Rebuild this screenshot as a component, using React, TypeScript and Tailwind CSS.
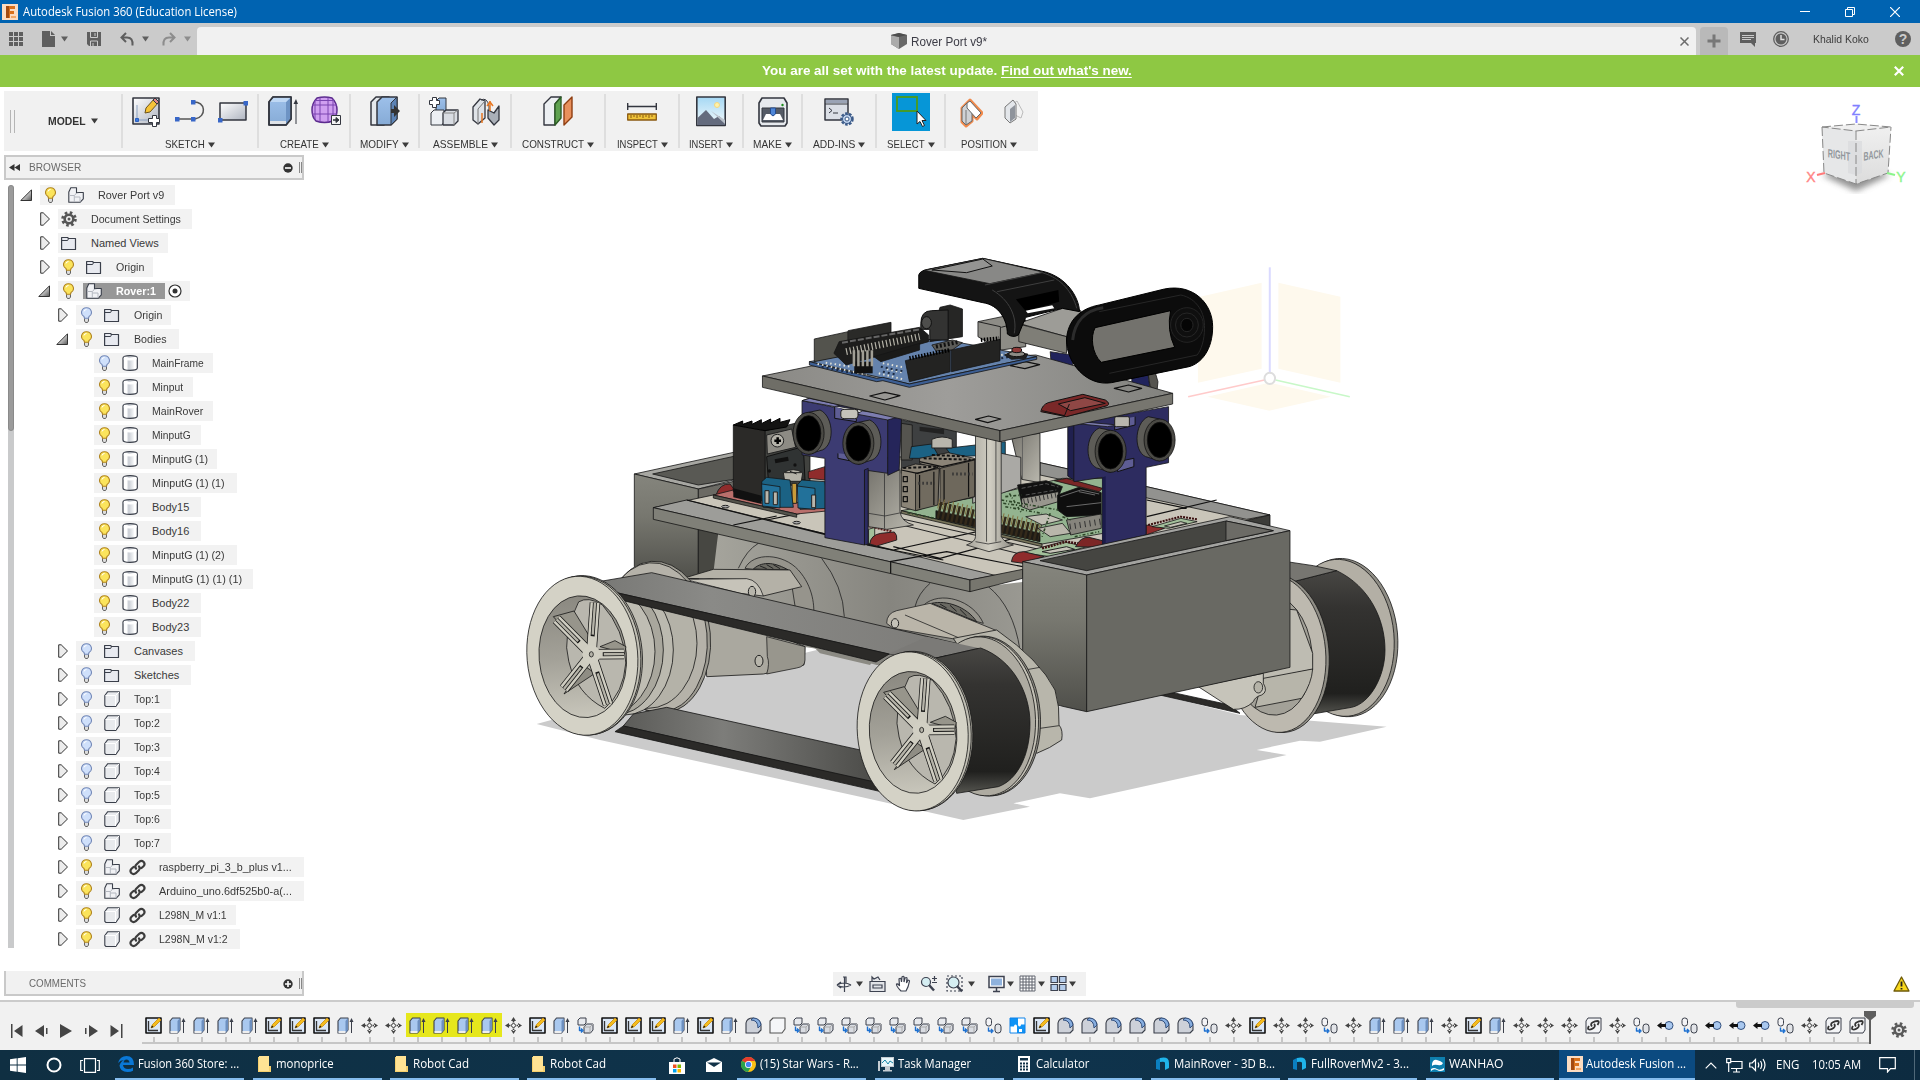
import React, { useLayoutEffect, useRef } from "react";

/* Text squeezed horizontally so that it fills exactly `w` pixels. */
function Fit({ w, children, className = "" }: { w: number; children: string; className?: string }) {
  const ref = useRef<HTMLSpanElement>(null);
  useLayoutEffect(() => {
    const el = ref.current;
    if (el) el.style.transform = `scaleX(${w / el.offsetWidth})`;
  }, [w]);
  return (
    <span className={"block shrink-0 whitespace-nowrap " + className} style={{ width: w }}>
      <span ref={ref} className="inline-block origin-left whitespace-nowrap">{children}</span>
    </span>
  );
}

const Caret = ({ c = "#3c3c3c" }: { c?: string }) => (
  <svg width="7" height="6" viewBox="0 0 7 6" className="shrink-0"><path d="M0 .5h7L3.500 5.500z" fill={c} /></svg>
);

const FusionLogo = () => (
  <svg width="16" height="16" viewBox="0 0 16 16">
    <rect width="16" height="16" fill="#fbdcc2" />
    <path d="M4 2h9v3H8v2h4v3H8v4H4z" fill="#d9711c" />
    <path d="M4 2h3v12H4z" fill="#a34a10" />
    <path d="M9 12h5v2H9z" fill="#f1a868" />
  </svg>
);

/* ---------- title and tab bars ---------- */

function TitleBar() {
  return (
    <div className="flex h-[23px] items-center bg-[#0063b1] pl-[2px] text-white">
      <FusionLogo />
      <Fit w={214} className="ml-[5px] font-['Open_Sans',sans-serif] text-[12px] leading-[23px]">Autodesk Fusion 360 (Education License)</Fit>
      <div className="ml-auto flex items-center gap-[35px] pr-[20px]">
        <svg width="10" height="10" viewBox="0 0 10 10"><path d="M0 4.500h10" stroke="#fff" /></svg>
        <svg width="10" height="10" viewBox="0 0 10 10" fill="none" stroke="#fff"><path d="M.5 2.500h7v7h-7zM2.500 2.500v-2h7v7h-2" /></svg>
        <svg width="10" height="10" viewBox="0 0 10 10"><path d="M0 0l10 10M10 0L0 10" stroke="#fff" strokeWidth="1.200" /></svg>
      </div>
    </div>
  );
}

function TabBar() {
  const g = "#5f5f5f";
  return (
    <div className="flex h-8 items-end bg-[#cbcbcb] font-['Liberation_Sans',Arial,sans-serif]">
      <div className="flex h-8 w-[197px] items-center pl-[9px]">
        <svg width="14" height="14" viewBox="0 0 14 14" fill={g}>
          {[0, 5, 10].map((y) => [0, 5, 10].map((x) => <rect key={x + "-" + y} x={x} y={y} width="4" height="4" />))}
        </svg>
        <svg className="ml-[19px]" width="13" height="16" viewBox="0 0 13 16" fill={g}><path d="M0 0h8v5h5v11H0zM9 0l4 4H9z" /></svg>
        <span className="ml-[6px]"><Caret c={g} /></span>
        <svg className="ml-[19px]" width="14" height="14" viewBox="0 0 14 14"><path d="M0 0h14v14H2l-2-2z" fill={g} /><path d="M3.500 0v5.500h7V0M3.500 14V9h7v5M8 1v3M6 11v3" fill="none" stroke="#cbcbcb" /></svg>
        <svg className="ml-[19px]" width="14" height="14" viewBox="0 0 14 14" fill="none" stroke={g} strokeWidth="2"><path d="M6 1L1.500 5.500L6 10M2 5.500h5c4 0 6 2.500 5.500 8" /></svg>
        <span className="ml-[8px]"><Caret c={g} /></span>
        <svg className="ml-[13px]" width="14" height="14" viewBox="0 0 14 14" fill="none" stroke="#8d8d8d" strokeWidth="2"><path d="M8 1l4.500 4.500L8 10M12 5.500H7c-4 0-6 2.500-5.500 8" /></svg>
        <span className="ml-[8px]"><Caret c="#8d8d8d" /></span>
      </div>
      <div className="flex h-7 w-[1499px] items-center rounded-t-[4px] bg-[#f1f1f1]">
        <svg className="ml-[694px]" width="16" height="16" viewBox="0 0 16 16">
          <path d="M0 2l8-2 8 2v9l-8 5-8-5z" fill="#686868" /><path d="M0 2.500l8 1.500v12l-8-5z" fill="#ababab" /><path d="M0 2l8-2 8 2-8 2z" fill="#4e4e4e" />
        </svg>
        <Fit w={76} className="ml-[4px] pt-px text-[12px] text-[#3c3c46]">Rover Port v9*</Fit>
        <svg className="mr-[7px] ml-auto" width="9" height="9" viewBox="0 0 9 9"><path d="M.5.5l8 8M8.500.5l-8 8" stroke="#6c6c6c" strokeWidth="1.500" /></svg>
      </div>
      <div className="ml-1 flex h-7 w-7 items-center justify-center rounded-t-[4px] bg-[#b9b9b9]">
        <svg width="14" height="14" viewBox="0 0 14 14"><path d="M7 .5v13M.5 7h13" stroke="#777" strokeWidth="3" /></svg>
      </div>
      <div className="flex h-8 flex-1 items-center pl-[12px]">
        <svg width="16" height="15" viewBox="0 0 16 15"><path d="M0 0h16v11h-1v4l-4-4H0z" fill={g} /><path d="M2 3.500h12M2 5.500h12M2 7.500h9" stroke="#cbcbcb" /></svg>
        <svg className="ml-[17px]" width="16" height="16" viewBox="0 0 16 16"><circle cx="8" cy="8" r="7.300" fill="none" stroke={g} strokeWidth="1.300" /><circle cx="8" cy="8" r="5.500" fill={g} /><path d="M8 4v4.500h3.500" stroke="#ddd" strokeWidth="1.500" fill="none" /></svg>
        <Fit w={56} className="ml-[24px] text-[11px] text-[#3c3c3c]">Khalid Koko</Fit>
        <span className="ml-[26px] flex h-4 w-4 items-center justify-center rounded-full bg-[#5f5f5f] text-[14px] font-bold leading-none text-[#cbcbcb]">?</span>
      </div>
    </div>
  );
}

function Notice() {
  return (
    <div className="flex h-8 items-center bg-[#8ec843] font-['Liberation_Sans',Arial,sans-serif] text-[13px] font-bold text-white">
      <Fit w={235} className="ml-[762px]">You are all set with the latest update.</Fit>
      <Fit w={131} className="ml-[4px] [&>span]:underline [&>span]:underline-offset-2">Find out what's new.</Fit>
      <svg className="mr-[16px] ml-auto" width="10" height="10" viewBox="0 0 10 10"><path d="M.8.8l8.400 8.400M9.200.8L.8 9.200" stroke="#fff" strokeWidth="2.200" /></svg>
    </div>
  );
}

/* ---------- ribbon ---------- */

const K = "#33363f";
const Gradients = () => (
  <svg width="0" height="0" className="absolute">
    <defs>
      <linearGradient id="gp" x1="0" y1="0" x2="1" y2="1"><stop offset="0" stopColor="#fff" /><stop offset="1" stopColor="#aeb4c0" /></linearGradient>
      <linearGradient id="gb" x1="0" y1="0" x2="0" y2="1"><stop offset="0" stopColor="#9dc0ea" /><stop offset="1" stopColor="#86abd6" /></linearGradient>
      <linearGradient id="gs" x1="0" y1="0" x2="0" y2="1"><stop offset="0" stopColor="#a5d8f4" /><stop offset="1" stopColor="#f4fafc" /></linearGradient>
      <linearGradient id="gt" x1="0" y1="0" x2="1" y2="1"><stop offset=".4" stopColor="#ddd" /><stop offset="1" stopColor="#555" /></linearGradient>
      <linearGradient id="gc" x1="0" y1="0" x2="1" y2="0"><stop offset="0" stopColor="#fff" /><stop offset=".25" stopColor="#fff" /><stop offset=".4" stopColor="#c9cdd4" /><stop offset=".7" stopColor="#eef0f2" /><stop offset=".8" stopColor="#fff" /></linearGradient>
    </defs>
  </svg>
);
const S = ({ w = 30, children }: { w?: number; children: React.ReactNode }) => (
  <svg width={w} height="32" viewBox={`0 0 ${w} 32`} fill="none" stroke={K} strokeLinejoin="round" className="shrink-0">{children}</svg>
);
const IcSketch = () => (
  <S><rect x="1" y="2" width="26" height="26" fill="url(#gp)" strokeWidth="1.600" /><path d="M5 24V9M5 24h13" stroke="#8aa0c0" />
    <path d="M13 17l1-5L23 2l4 4-9 10z" fill="#f6c338" stroke="#6d5318" /><path d="M23 2l4 4-2 2-4-4z" fill="#e08888" /><rect x="3.500" y="22.500" width="3" height="3" fill="#3a7be0" stroke="#2b5fc0" />
    <path d="M20.500 19.500h4v3h3v4h-3v4h-4v-4h-4v-4h4z" fill="#fff" /></S>
);
const IcLine = () => (
  <S><path d="M3 23h17C32 21 31 5 18 6" stroke="#555" strokeWidth="1.500" /><g fill="#3867c8" stroke="none"><rect x="0" y="21" width="4.500" height="4.500" /><rect x="16" y="21" width="4.500" height="4.500" /><rect x="16" y="4" width="4.500" height="4.500" /></g></S>
);
const IcRect = () => (
  <S><rect x="2" y="7" width="26" height="17" fill="url(#gp)" strokeWidth="1.500" /><g fill="#3867c8" stroke="none"><rect x="0" y="22" width="4.500" height="4.500" /><rect x="25.500" y="5" width="4.500" height="4.500" /></g></S>
);
const IcExtrude = () => (
  <S><path d="M1 6l4-5h18v22l-5 6H1z" fill="url(#gb)" strokeWidth="1.600" /><path d="M18 6l5-5v22l-5 6z" fill="#6d93c4" stroke="none" /><path d="M1.500 6l4-4.500h17L18 6z" fill="#bfd8f4" stroke="none" /><path d="M2 25h16v3H2z" fill="#dfe3e8" stroke="none" /><path d="M1 6l4-5h18v22l-5 6H1z" strokeWidth="1.600" /><path d="M28 28V7" /><path d="M25.500 8L28 3l2 5z" fill={K} stroke="none" /></S>
);
const IcForm = () => (
  <S><path d="M6 2Q13.500 0 21 2q5 5 5 12 0 7-4 11-8.500 3-17 0Q1 21 1 14 1 7 6 2z" fill="#cf9ff0" stroke="#5b2b8d" strokeWidth="1.500" /><path d="M9 1.500v25M17 1.500v25M22 3v22M4 4v20M1 9h25M1 18h25M4 4.500h19" stroke="#7a45b0" /><rect x="20.500" y="19.500" width="9" height="9" fill="#f4f4f4" /><path d="M22 24h4" strokeWidth="1.500" /><path d="M25 21.500l3 2.500-3 2.500z" fill={K} /></S>
);
const IcPress = () => (
  <S><path d="M1 6l5-5h13l-5 5v23H1z" fill="#e4e8ec" strokeWidth="1.500" /><path d="M7 6l5-5h15v22l-6 6H7z" fill="url(#gb)" strokeWidth="1.500" /><path d="M21 7v22l6-6V1z" fill="#5c83b5" /><path d="M21 13h3V9l6 6-6 6v-4h-3z" fill="#333" stroke="none" /></S>
);
const IcNewComp = () => (
  <S><path d="M7 5l3-3h7v12l-3 3H7z" fill="url(#gb)" /><path d="M2 17l3-3h10v12l-2 3H2z" fill="#eceff3" /><path d="M14 17l3-3h12v11l-4 4H14z" fill="#d9dde3" strokeWidth="1.300" /><path d="M14 17h11v12M25 17l4-3" stroke="#888" /><path d="M3.500 1.500h4v3h3v4h-3v3h-4v-3h-3v-4h3z" fill="#fff" /></S>
);
const IcJoint = () => (
  <S><path d="M1 11L8 3l5 2v17L6 28l-5-4z" fill="#dfe3e8" strokeWidth="1.300" /><path d="M6 13v15M6 13l7-8" stroke="#777" /><path d="M16 14l6 3 5-7v14l-5 5-6-7z" fill="#aab0b8" strokeWidth="1.300" /><path d="M9 4q6-3 8 6v4" /><path d="M10 17v10M18 5v10" stroke="#e87722" strokeWidth="1.500" /><path d="M15 10l3-4 3 4" stroke="#e87722" strokeWidth="1.500" /></S>
);
const IcPlane = () => (
  <S><path d="M1 8l7-7h10l-6 7v21H1z" fill="#eceff2" strokeWidth="1.400" /><path d="M12 8l6-7v21l-6 7z" fill="#5fa251" stroke="#2c5c25" strokeWidth="1.400" /><path d="M21 9l8-8v20l-8 8z" fill="#e8905c" stroke="#8f3e11" strokeWidth="1.400" /></S>
);
const IcMeasure = () => (
  <S><path d="M1 10.500h28M.7 7v7M29.300 7v7" strokeWidth="1.400" /><rect x=".7" y="18" width="28.600" height="6" fill="#efc238" stroke="#8a5a12" strokeWidth="1.300" /><path d="M4 19v3M7 19v2M10 19v3M13 19v2M16 19v3M19 19v2M22 19v3M25 19v2" stroke="#8a5a12" /></S>
);
const IcInsert = () => (
  <S><rect x=".8" y="1" width="28.400" height="28.500" fill="url(#gs)" strokeWidth="1.600" /><circle cx="21" cy="9" r="2.500" fill="#fff2a8" stroke="#f4d780" /><path d="M1.500 22L10 14l8 9 5-3 6 6v3h-27.500z" fill="#646b7d" stroke="none" /><path d="M15 15l14 13v-4z" fill="#b9c1cb" stroke="none" /></S>
);
const IcMake = () => (
  <S><path d="M4 2h22l3 5v20l-2 3H3l-2-3V7z" fill="#e6e9ed" strokeWidth="1.600" /><rect x="4" y="12" width="22" height="14" fill="#555b66" /><path d="M8 18h14l3 6H5z" fill="#fff" stroke="none" /><path d="M12.500 12h5v6l-2.500 2-2.500-2z" fill="#4e86d8" stroke="#244c90" /><circle cx="24.500" cy="9" r="1.200" fill="#1a8c1a" stroke="none" /></S>
);
const IcAddins = () => (
  <S><rect x="1" y="3" width="23" height="21" fill="#dbdfe6" strokeWidth="1.500" /><path d="M1 8h23" /><rect x="2" y="4" width="21" height="3" fill="#9aa3b5" stroke="none" /><path d="M5 12l3 2.500L5 17M9 17h5" /><circle cx="23" cy="23" r="5.500" fill="#bfd2ec" stroke="#3b5a88" strokeWidth="2.500" strokeDasharray="2.500 1.400" /><circle cx="23" cy="23" r="4.500" fill="#bfd2ec" stroke="#3b5a88" /><circle cx="23" cy="23" r="2" fill="#fff" stroke="#3b5a88" /></S>
);
const IcSelect = () => (
  <span className="flex h-[38px] w-[38px] bg-[#0696d7]">
    <svg width="38" height="38" viewBox="0 0 38 38"><rect x="5" y="4" width="20" height="14" fill="none" stroke="#4d9b1a" strokeWidth="1.800" /><path d="M25 18v13l3-2.500 2.500 5 2-1-2.500-5h4z" fill="#fff" stroke="#222" /></svg>
  </span>
);
const IcPos1 = () => (
  <S w={23}><path d="M2 12L10 4l12 13-5 6-5-5v7l-6 5-4-4z" stroke="#f08a4c" strokeWidth="3" fill="#f08a4c" /><path d="M2 12l5-5 5 4v14l-6 4-4-4z" fill="#cfd2d6" stroke="#666" /><path d="M6 14v15" stroke="#777" /><path d="M7 7l3-2 11 12-5 5-9-10z" fill="#fff" stroke="#666" /></S>
);
const IcPos2 = () => (
  <S w={20}><path d="M9 8l4-3 6 11-2 6-8-4z" fill="#f2f2f2" stroke="#bbb" /><path d="M1 11l8-7 3 4v15l-6 4-5-5z" fill="#e3e6ea" stroke="#777" /><path d="M6 13v13l5-4V9z" fill="#8e939b" stroke="none" /></S>
);

const GROUPS: { label: string; tw: number; w: number; icons: React.ReactNode[] }[] = [
  { label: "SKETCH", tw: 40, w: 136, icons: [<IcSketch />, <IcLine />, <IcRect />] },
  { label: "CREATE", tw: 39, w: 92, icons: [<IcExtrude />, <IcForm />] },
  { label: "MODIFY", tw: 39, w: 69, icons: [<IcPress />] },
  { label: "ASSEMBLE", tw: 55, w: 92, icons: [<IcNewComp />, <IcJoint />] },
  { label: "CONSTRUCT", tw: 62, w: 94, icons: [<IcPlane />] },
  { label: "INSPECT", tw: 41, w: 74, icons: [<IcMeasure />] },
  { label: "INSERT", tw: 34, w: 64, icons: [<IcInsert />] },
  { label: "MAKE", tw: 29, w: 59, icons: [<IcMake />] },
  { label: "ADD-INS", tw: 42, w: 74, icons: [<IcAddins />] },
  { label: "SELECT", tw: 38, w: 69, icons: [<IcSelect />] },
  { label: "POSITION", tw: 46, w: 86, icons: [<IcPos1 />, <IcPos2 />] },
];

function Ribbon() {
  return (
    <div className="mt-1 ml-1 flex h-[60px] w-[1034px] bg-[#f1f1f1] py-[3px] font-['Liberation_Sans',Arial,sans-serif] text-[#333]">
      <div className="flex w-[119px] items-center border-r-2 border-[#dedede]">
        <div className="ml-[6px] h-[23px] w-[5px] border-x border-[#b5b5b5]" />
        <Fit w={38} className="ml-[33px] pt-[2px] text-[11.500px] font-bold">MODEL</Fit>
        <span className="ml-[5px]"><Caret /></span>
      </div>
      {GROUPS.map((g, i) => (
        <div key={g.label} style={{ width: g.w }} className={"flex shrink-0 flex-col items-center " + (i < 10 ? "border-r-2 border-[#dedede]" : "")}>
          <div className={"-mt-px flex h-[38px] shrink-0 items-center " + (g.label === "POSITION" ? "gap-[21px] pl-[6px]" : "gap-[13px]")}>
            {g.icons.map((ic, k) => <React.Fragment key={k}>{ic}</React.Fragment>)}
          </div>
          <div className="mt-[7px] flex shrink-0 items-center gap-[3px] text-[11.500px] leading-[13px]">
            <Fit w={g.tw}>{g.label}</Fit><Caret />
          </div>
        </div>
      ))}
    </div>
  );
}

/* ---------- browser tree ---------- */

type Kind = "comp" | "gear" | "folder" | "body" | "box";
type Row = { t: string; tw: number; l: number; w: number; k: Kind; on?: boolean; open?: boolean; leaf?: boolean; link?: boolean; sel?: boolean };
const body = (t: string, tw: number, w: number, on = true): Row => ({ t, tw, l: 3, w, k: "body", on, leaf: true });
const ROWS: Row[] = [
  { t: "Rover Port v9", tw: 66, l: 0, w: 135, k: "comp", on: true, open: true },
  { t: "Document Settings", tw: 90, l: 1, w: 134, k: "gear" },
  { t: "Named Views", tw: 68, l: 1, w: 110, k: "folder" },
  { t: "Origin", tw: 28, l: 1, w: 95, k: "folder", on: true },
  { t: "Rover:1", tw: 40, l: 1, w: 132, k: "comp", on: true, open: true, sel: true },
  { t: "Origin", tw: 28, l: 2, w: 95, k: "folder", on: false },
  { t: "Bodies", tw: 33, l: 2, w: 103, k: "folder", on: true, open: true },
  body("MainFrame", 52, 119, false),
  body("Minput", 31, 99),
  body("MainRover", 51, 119),
  body("MinputG", 39, 107),
  body("MinputG (1)", 56, 123),
  body("MinputG (1) (1)", 73, 143),
  body("Body15", 37, 107),
  body("Body16", 37, 107),
  body("MinputG (1) (2)", 73, 143),
  body("MinputG (1) (1) (1)", 90, 159),
  body("Body22", 37, 107),
  body("Body23", 37, 107),
  { t: "Canvases", tw: 49, l: 2, w: 119, k: "folder", on: false },
  { t: "Sketches", tw: 45, l: 2, w: 115, k: "folder", on: false },
  ...[1, 2, 3, 4, 5, 6, 7].map((n): Row => ({ t: "Top:" + n, tw: 26, l: 2, w: 95, k: "box", on: false })),
  { t: "raspberry_pi_3_b_plus v1...", tw: 133, l: 2, w: 228, k: "comp", on: true, link: true },
  { t: "Arduino_uno.6df525b0-a(...", tw: 133, l: 2, w: 228, k: "comp", on: true, link: true },
  { t: "L298N_M v1:1", tw: 68, l: 2, w: 160, k: "box", on: true, link: true },
  { t: "L298N_M v1:2", tw: 69, l: 2, w: 164, k: "box", on: true, link: true },
];

const Bulb = ({ on }: { on: boolean }) => (
  <svg width="11" height="16" viewBox="0 0 11 16" className="shrink-0">
    <path d="M3.500 10.500h4v3.500l-1 1.500h-2l-1-1.500z" fill="#ddd" stroke="#555" strokeWidth=".9" />
    <path d="M5.500.7a4.700 4.700 0 0 1 2.500 8.800l-.5 1.700h-4L3 9.500A4.700 4.700 0 0 1 5.500.7z" fill={on ? "#fbe45c" : "#cfe0fb"} stroke={on ? "#b08420" : "#7489b8"} strokeWidth="1.100" />
    <path d="M3 4.500q.5-2 2.500-2" stroke="#fff" fill="none" />
  </svg>
);
const Gear = ({ c = "#555", bg = "#f1f1f1" }: { c?: string; bg?: string }) => (
  <svg width="16" height="16" viewBox="0 0 16 16" className="shrink-0">
    <circle cx="8" cy="8" r="6.300" fill="none" stroke={c} strokeWidth="3" strokeDasharray="2.500 2.450" />
    <circle cx="8" cy="8" r="5.600" fill={c} /><circle cx="8" cy="8" r="3" fill={bg} /><circle cx="8" cy="8" r="1.500" fill={c} />
  </svg>
);
const KindIcon = ({ k }: { k: Kind }) => {
  if (k === "gear") return <Gear />;
  return (
    <svg width="17" height="16" viewBox="0 0 17 16" fill="none" stroke="#3a3f4a" strokeLinejoin="round" className="shrink-0">
      {k === "folder" && <><path d="M.6 2.500h5.900l1 1h7v11H.6z" fill="#e8eaf0" strokeWidth="1.200" /><path d="M.6 5.500h6l1-2" /></>}
      {k === "body" && <><path d="M1 3q0-2.300 7-2.300T15.300 3v10q0 2.300-7.300 2.300T1 13z" fill="url(#gc)" strokeWidth="1.200" /><path d="M2 3q6 2.500 12.500 0" stroke="#fff" strokeWidth="2.500" /></>}
      {k === "box" && <><path d="M.8 4.500l3-3.800h11.500v9.800l-3.500 5H2l-1.200-1.200z" fill="#e8eaed" strokeWidth="1.100" /><path d="M1.500 4.500h10v10.500M11.500 4.500l3.500-3.500" stroke="#fff" /></>}
      {k === "comp" && <><path d="M.8 5l2-4.200h5.700v5l2.500-.3 1.500 0h2.800v6.300l-3.300 3.500H.8z" fill="#f1f2f5" strokeWidth="1.100" /><path d="M1.300 8.500h5v6.500M6.500 8.500l2-2.500M6.800 10h5.200v5" stroke="#b4b8c0" /></>}
    </svg>
  );
};
const LinkIcon = () => (
  <svg width="17" height="17" viewBox="0 0 17 17" fill="none" stroke="#3d3d3d" strokeWidth="2.200" strokeLinecap="round" className="shrink-0">
    <path d="M7 9.500q-1.500-2 .2-3.700l3-3Q12.500 1 14.700 3q1.800 2.200-.2 4.200L12.500 9M10 7.500q1.500 2-.2 3.700l-3 3Q4.500 16 2.300 14q-1.800-2.200.2-4.200L4.500 8" />
  </svg>
);

const INDENT = ["pl-[6px]", "pl-[24px]", "pl-[42px]", "pl-[60px]"];

function TreeRow({ r }: { r: Row }) {
  return (
    <div className={"flex h-5 items-center " + INDENT[r.l]}>
      <div className="flex w-5 shrink-0 items-center">
        {!r.leaf && (r.open
          ? <svg width="12" height="12" viewBox="0 0 12 12"><path d="M11.500 .8v10.700H.8z" fill="url(#gt)" stroke="#333" /></svg>
          : <svg width="12" height="14" viewBox="0 0 12 14" className="ml-[2px]"><path d="M.7.8h2.500L9.500 7l-6.300 6.200H.7z" fill="#ececec" stroke="#333" /></svg>)}
      </div>
      <div className="flex h-5 shrink-0 items-center overflow-hidden bg-[#f2f2f2]" style={{ width: r.w }}>
        {r.on === undefined
          ? <div className="ml-[3px] flex w-[30px]"><KindIcon k={r.k} /></div>
          : <>
            <div className="flex w-7 shrink-0 pl-[5px]"><Bulb on={r.on} /></div>
            {!r.sel && <div className={"flex shrink-0 " + (r.link ? "w-[25px]" : "w-[30px]")}><KindIcon k={r.k} /></div>}
          </>}
        {r.link && <div className="flex w-[30px] shrink-0"><LinkIcon /></div>}
        {r.sel ? (
          <>
            <div className="-ml-[3px] flex h-4 w-[82px] shrink-0 items-center bg-[#979797] pl-[3px]">
              <div className="flex w-[30px]"><KindIcon k={r.k} /></div>
              <Fit w={r.tw} className="font-bold text-white">{r.t}</Fit>
            </div>
            <svg width="14" height="14" viewBox="0 0 14 14" className="ml-[3px] shrink-0"><circle cx="7" cy="7" r="6" fill="#fff" stroke="#333" strokeWidth="1.200" /><circle cx="7" cy="7" r="2.500" fill="#333" /></svg>
          </>
        ) : <Fit w={r.tw}>{r.t}</Fit>}
      </div>
    </div>
  );
}

function PanelBar({ title, tw, plus }: { title: string; tw: number; plus?: boolean }) {
  return (
    <div className={"ml-1 flex h-[25px] w-[300px] items-center border-2 border-[#c9c9c9] bg-[#f1f1f1] font-['Liberation_Sans',Arial,sans-serif] text-[11.500px] text-[#6a6a6a] " + (plus ? "border-t-0 pt-[2px]" : "")}>
      <div className="flex w-[23px] pl-[3px]">
        {!plus && <svg width="11" height="7" viewBox="0 0 11 7"><path d="M5.500 0v7L0 3.500zM11 0v7L5.500 3.500z" fill="#333" /></svg>}
      </div>
      <Fit w={tw}>{title}</Fit>
      <svg className="mr-[6px] ml-auto" width="10" height="10" viewBox="0 0 10 10"><circle cx="5" cy="5" r="4.700" fill="#333" /><path d={plus ? "M2 5h6M5 2v6" : "M2 5h6"} stroke="#fff" strokeWidth="1.600" /></svg>
      <div className="h-[11px] w-[3px] border-x border-[#888]" />
    </div>
  );
}

/* ---------- 3D model ---------- */

const P = (p: { d: string; f: string; s?: string; w?: number }) => <polygon points={p.d} fill={p.f} stroke={p.s ?? "#151515"} strokeWidth={p.w ?? 0.8} />;

const WHEEL_SPOKES = [[285, 548], [170, 598], [192, 806], [324, 853], [372, 702]];

function WheelFace() {
  return (
    <g stroke="#151515" strokeWidth=".8">
      <g transform="rotate(-5 250 707)">
        <ellipse cx="257" cy="706" rx="170" ry="239" fill="#a8a69c" />
        <ellipse cx="253" cy="707" rx="169" ry="239" fill="#c2c0b5" />
        <ellipse cx="247" cy="707" rx="166" ry="239" fill="#d4d2c6" />
        <ellipse cx="248" cy="710" rx="131" ry="183" fill="url(#hole)" />
        <path d="M250 545Q190 640 205 720 220 820 300 870 360 830 375 740 380 640 320 560 280 530 250 545z" fill="#b9b7ae" />
      </g>
      <path d="M160 590L222 573 275 660 240 680z" fill="#97958b" /><path d="M192 822L285 760 250 735z" fill="#8f8d84" /><path d="M300 680L345 662 378 680 374 700z" fill="#97958b" />
      {WHEEL_SPOKES.map(([x, y]) => <path key={x} d={`M274 703L${x} ${y}`} strokeWidth="10.500" fill="none" />)}
      {WHEEL_SPOKES.map(([x, y]) => <path key={x} d={`M274 703L${x} ${y}`} stroke="#cfcdc1" strokeWidth="9" fill="none" />)}
      {WHEEL_SPOKES.map(([x, y]) => <path key={x} d={`M${274 + (x - 274) * 0.35} ${703 + (y - 703) * 0.35}L${x} ${y}`} strokeWidth="4" fill="none" />)}
      {WHEEL_SPOKES.map(([x, y]) => <path key={x} d={`M${274 + (x - 274) * 0.38} ${703 + (y - 703) * 0.38}L${x} ${y}`} stroke="#b5b3a8" strokeWidth="2.400" fill="none" />)}
      <circle cx="274" cy="703" r="27" fill="#d1cfc3" stroke="none" /><ellipse cx="274" cy="703" rx="6" ry="8" fill="#b5b3a8" />
    </g>
  );
}

function Sonar({ x, y, left }: { x: number; y: number; left?: boolean }) {
  const dx = left ? -28 : 28;
  return (
    <g stroke="#111" strokeWidth=".8">
      <path d={`M${x} ${y - 63}L${x + dx} ${y - 70}C${x + dx * 2.3} ${y - 50} ${x + dx * 2.3} ${y + 45} ${x + dx} ${y + 52}L${x} ${y + 63}z`} fill="#5d5c57" />
      <ellipse cx={x} cy={y} rx="38" ry="63" fill="#4a4944" /><ellipse cx={x} cy={y} rx="30" ry="53" fill="#000" />
    </g>
  );
}

function Model() {
  return (
    <svg className="pointer-events-none absolute top-[153px] left-[500px] [&_*]:[vector-effect:non-scaling-stroke]" width="920" height="600" viewBox="500 240 920 600" strokeLinejoin="round">
      <defs>
        <linearGradient id="hole" x1="0" y1="0" x2="0" y2="1"><stop offset="0" stopColor="#8b8981" /><stop offset=".5" stopColor="#a3a198" /><stop offset="1" stopColor="#c8c6bb" /></linearGradient>
        <linearGradient id="boxl" x1="0" y1="0" x2="0" y2="1"><stop offset="0" stopColor="#85857d" /><stop offset=".4" stopColor="#77776f" /><stop offset="1" stopColor="#4f4f4a" /></linearGradient>
        <linearGradient id="belt" x1="0" y1="0" x2="1" y2="0"><stop offset="0" stopColor="#787875" /><stop offset=".3" stopColor="#8a8a87" /><stop offset="1" stopColor="#7b7a77" /></linearGradient>
        <linearGradient id="belt2" x1="0" y1="0" x2="1" y2="0"><stop offset="0" stopColor="#5b5b58" /><stop offset=".4" stopColor="#7d7d7a" /><stop offset="1" stopColor="#4c4c49" /></linearGradient>
        <linearGradient id="rub" x1="0" y1="0" x2="0" y2="1"><stop offset="0" stopColor="#484744" /><stop offset=".25" stopColor="#343331" /><stop offset=".85" stopColor="#20201e" /><stop offset="1" stopColor="#555550" /></linearGradient>
        <linearGradient id="body" x1="0" y1="0" x2="1" y2="0"><stop offset="0" stopColor="#a5a49c" /><stop offset=".5" stopColor="#86857f" /><stop offset="1" stopColor="#a09f98" /></linearGradient>
        <linearGradient id="post" x1="0" y1="0" x2="1" y2="0"><stop offset="0" stopColor="#a7a59c" /><stop offset=".5" stopColor="#d0cdc2" /><stop offset="1" stopColor="#8e8c84" /></linearGradient>
        <linearGradient id="postd" x1="0" y1="0" x2="1" y2="1"><stop offset="0" stopColor="#77756e" /><stop offset="1" stopColor="#b9b7ad" /></linearGradient>
        <linearGradient id="deck" x1="0" y1="0" x2="1" y2="0"><stop offset="0" stopColor="#8a8985" /><stop offset=".45" stopColor="#9e9d9a" /><stop offset="1" stopColor="#82827e" /></linearGradient>
      </defs>

      {/* ground shadow, rear box, undercarriage */}
      <g transform="translate(500 420) scale(.33333)">
        <P s="none" f="#cbcbcb" d="110,912 620,772 950,690 1130,730 1680,860 1980,825 2220,885 2660,920 2460,965 2400,962 2270,990 2360,1005 1770,1135 1680,1120 1540,1150 1590,1160 1390,1200 1080,1130 300,960" />
        <P f="#a7a7a2" d="403,162 720,93 780,160 595,207" />
        <P f="#595954" d="458,162 720,105 720,175 595,195" />
        <P f="url(#boxl)" d="403,162 595,207 595,480 403,440" />
        <P f="#6b6a64" d="595,207 720,180 720,300 595,300" />
        <P f="#474742" d="595,320 655,335 655,480 595,470" />
        <P f="url(#body)" s="none" d="655,335 1410,505 1700,470 1700,760 1420,740 1130,735 940,685 640,640 640,460" />
        <g fill="none" stroke="#222" strokeWidth=".8"><path d="M715 445Q740 390 775 370M965 415Q1030 500 1033 590M1245 560Q1255 520 1290 490M1465 500Q1540 560 1560 690" /></g>
        <path d="M735 445C760 395 850 400 895 450 940 500 945 560 940 600L890 590 870 460z" fill="#96948c" stroke="#222" strokeWidth=".8" />
        <path d="M760 447C790 420 830 430 865 450z" fill="#6b6a63" stroke="#222" /><path d="M780 438l20 8M800 434l20 12M820 434l20 12" stroke="#222" />
        <path d="M1270 556C1320 510 1420 540 1450 610L1300 570z" fill="#96948c" stroke="#222" strokeWidth=".8" />
        <path d="M1295 550C1340 540 1400 560 1430 605z" fill="#6b6a63" stroke="#222" /><path d="M1320 552l20 12M1350 556l20 18M1380 568l20 20" stroke="#222" />
        <P f="#aaa89f" d="610,560 820,640 915,680 912,735 790,762 620,770" />
        <path d="M800 650L915 680V720Q915 740 890 744L800 762Q810 730 802 710z" fill="#98968d" stroke="#222" strokeWidth=".8" /><ellipse cx="777" cy="723" rx="12" ry="17" fill="#b7b5ab" stroke="#222" />
        <P f="#b4b1a7" d="550,475 640,448 870,450 905,500 790,528 740,478" />
        <path d="M555 478L740 476Q775 480 790 528L720 520z" fill="#c6c3b9" stroke="#222" strokeWidth=".8" /><ellipse cx="756" cy="515" rx="11" ry="16" fill="#b7b5ab" stroke="#222" />
        <P f="#8b8a83" s="none" d="945,685 1120,722 1110,735 960,700" />
        <g stroke="#151515" strokeWidth=".8">
          <g transform="rotate(-5 475 650)"><ellipse cx="473" cy="652" rx="158" ry="229" fill="#9d9b92" /><ellipse cx="467" cy="652" rx="154" ry="225" fill="#b5b2a9" /></g>
          <ellipse cx="445" cy="670" rx="146" ry="195" fill="#b4b2a8" /><ellipse cx="375" cy="690" rx="145" ry="195" fill="#bbb9af" /><ellipse cx="345" cy="690" rx="145" ry="195" fill="#a9a79d" /><ellipse cx="320" cy="695" rx="145" ry="190" fill="#bfbdb3" />
        </g>
        <P f="url(#belt2)" d="370,918 400,882 500,862 1090,992 1120,1088" />
        <P f="#2b2a28" d="345,935 370,918 1125,1086 1165,1120" />
        <path d="M1160 610Q1160 580 1190 572L1290 550 1490 632 1380 660 1180 625z" fill="#bab5a9" stroke="#222" strokeWidth=".8" /><path d="M1215 585L1380 655" stroke="#222" strokeWidth=".8" /><ellipse cx="1185" cy="610" rx="11" ry="14" fill="#c5c2b8" stroke="#222" />
        <P f="url(#belt)" d="290,486 455,458 1435,685 1300,715 1165,702 345,517" />
        <P f="#2b2a28" d="345,517 1168,702 1128,726 370,542" />
      </g>

      {/* right hand wheels */}
      <g transform="translate(940 420) scale(.33333)" stroke="#151515" strokeWidth=".8">
        <g transform="rotate(-5 1210 653)"><ellipse cx="1213" cy="653" rx="160" ry="238" fill="#8f8d85" /><ellipse cx="1204" cy="653" rx="158" ry="236" fill="#b3afa5" /></g>
        <path d="M1000 500L1190 452C1290 500 1335 600 1335 690 1335 770 1290 850 1235 862L1100 885z" fill="url(#rub)" />
        <P f="#777671" d="1040,425 1120,437 1190,452 1040,490" />
        <P f="#2c2b29" d="655,824 700,818 870,855 900,880" />
        <g transform="rotate(-5 1015 700)"><ellipse cx="1015" cy="700" rx="152" ry="238" fill="#8f8d85" /><ellipse cx="1005" cy="700" rx="152" ry="237" fill="#bdb9af" /><ellipse cx="994" cy="702" rx="122" ry="182" fill="#a3a198" /></g>
        <P f="#bebcb2" d="960,560 1070,570 1118,700 1118,748 960,780" />
        <path d="M970 775L1118 747Q1115 790 1085 835L945 862z" fill="#b7b5aa" />
        <path d="M775 800L970 760V790Q985 815 965 825 945 830 940 845 915 870 880 868z" fill="#c6c4ba" /><ellipse cx="955" cy="802" rx="13" ry="17" fill="#b5b3a8" />
      </g>

      {/* lower deck */}
      <g transform="translate(500 420) scale(.33333)">
        <P f="#c9c5b9" d="460,263 640,225 1180,110 1620,128 1940,200 2310,285 2200,330 1568,460 1485,466 1410,480" />
        <P f="#9d9d99" d="460,263 560,240 1485,466 1410,480" />
        <P f="#92928f" d="1620,128 1940,200 2310,285 2240,298 1900,225 1620,165" />
        <P f="#3c3c39" d="2310,285 2310,330 2200,310" />
        <P f="#808078" d="460,263 1410,480 1410,515 460,298" />
        <P f="#77766e" d="1410,480 1568,448 1568,475 1410,515" />
        <g fill="none" stroke="#111" strokeWidth="1.200"><path d="M560 240L980 345M800 300L1180 390 1500 320M800 300L900 280M1180 380L1320 415 1560 350M700 315L830 288M1170 425L1340 395 1568 440M1172 425V460M1940 240L2060 265M1940 290L2150 240M1100 375L1330 420" /></g>
        <ellipse cx="676" cy="260" rx="11" ry="4" fill="#aaa" stroke="#222" /><ellipse cx="890" cy="308" rx="11" ry="4" fill="#aaa" stroke="#222" />
        {/* motor driver */}
        <path d="M648 225Q660 190 690 192L700 205 700 240z" fill="#8f2c2c" stroke="#222" />
        <P f="#b96f6b" d="640,225 700,210 1010,270 890,282" /><P f="#54544c" d="640,225 890,282 890,292 640,234" />
        <P f="#41423f" d="795,32 885,10 930,60 930,200 795,190" />
        <P f="#8f2c2c" d="925,155 975,140 975,180 925,175" />
        <path d="M800 45l75-18 12 55-85 20z" fill="#8d8b84" stroke="#222" /><circle cx="832" cy="62" r="19" fill="#b5b3aa" stroke="#222" /><path d="M823 62h20M833 52v20" stroke="#000" strokeWidth="2.500" />
        <path d="M800 110l110-30 5 100-110 0z" fill="#303333" stroke="#111" /><path d="M825 124l40-8" stroke="#111" strokeWidth="4" /><circle cx="808" cy="153" r="5" fill="#111" /><circle cx="885" cy="135" r="5" fill="#111" />
        <P f="#2b2a28" d="700,15 795,32 795,245 700,215" />
        <path d="M700 15l28-12 0 10 28-10 0 10 28-14 0 12 28-14 0 12 28-14 0 12 30-8-10 22-65 11z" fill="#131312" stroke="#000" />
        <path d="M700 205l85 22v25l-85-20z" fill="#111" />
        <path d="M876 190h14v60h-14z" fill="#c89b3a" stroke="#222" /><path d="M850 158q30-18 58 0l-4 26h-50z" fill="#b5b2a8" stroke="#222" /><path d="M853 158h52M870 154l20 8" stroke="#222" />
        <P f="#1b6284" d="785,185 800,172 870,180 880,262 790,262" /><P f="#1b6284" d="892,195 905,180 975,185 985,265 900,268" />
        <P f="#22719a" d="785,192 840,200 840,264 787,258" /><P f="#22719a" d="892,198 945,205 945,268 894,264" />
        <path d="M795 212h12v38h-12zM820 216h12v38h-12zM935 225h12v38h-12z" fill="#b9b6ac" stroke="#222" />
      </g>

      {/* electronics, posts and upper deck */}
      <g transform="translate(740 240) scale(.40816 .33333)">
        <g><P s="none" f="#fef9ed" d="1122,172 1278,128 1278,386 1122,428" /><P s="none" f="#fef9ed" d="1319,128 1471,170 1471,428 1319,386" /><P s="none" f="#fef9ed" d="1297,428 1448,470 1297,512 1145,470" />
          <path d="M1298 82V400" stroke="#dadaff" strokeWidth="2" /><path d="M1098 470L1285 420" stroke="#ffcaca" strokeWidth="1.500" /><path d="M1312 420L1494 470" stroke="#c8f8c8" strokeWidth="1.500" /><ellipse cx="1298" cy="415" rx="13" ry="17" fill="#fff" stroke="#ddd" strokeWidth="2" /></g>

        <P f="#3e4041" d="395,540 530,570 530,640 395,700" /><P f="#55544f" d="395,550 422,555 422,660 395,660" /><P f="#1b6284" d="420,620 470,612 490,655 415,655" /><P f="#1b6284" d="505,625 650,605 650,645 520,650" />
        <path d="M440 560l60 8v15l-60-10z" fill="#222" /><path d="M470 598q25-14 50 0v26h-50z" fill="#b9b6ac" stroke="#222" />
        <P f="url(#postd)" d="665,590 735,580 735,728 690,718" /><path d="M692 590V718" stroke="#555" strokeWidth=".8" />
        <P f="#93b38f" d="395,812 640,758 790,715 890,715 890,880 740,912" /><P f="#77745a" d="395,812 740,912 740,920 395,820" />
        <path d="M390 835l350 95-60 10-300-90z" fill="none" stroke="#222" />
        <P f="#aaa9a5" d="570,660 640,640 688,652 688,740 570,790" />
        <P f="#8b8477" d="440,655 510,638 575,655 575,770 500,790 490,690 440,670" /><P f="#6e685c" d="490,685 575,660 575,770 490,795" />
        <P f="#8b8477" d="395,685 430,672 488,680 485,790 430,812 395,800" /><P f="#716b5f" d="430,700 488,685 485,795 430,812" />
        <path d="M395 690l40 10 50-18M440 665l55 15 80-22M400 710h10v15h-10zM400 740h10v15h-10zM400 770h10v15h-10zM500 690V785M560 668V770M440 705V805M475 695V795" fill="none" stroke="#111" strokeWidth="1.200" />
        <path d="M437 730h40M520 702h50" stroke="#333" strokeWidth="3" strokeDasharray="1.500 2.500" />
        <path d="M400 684l80-4M450 655l115 4M470 645l80 4" stroke="#111" strokeWidth="2" strokeDasharray="3 2" />
        <P f="#1d1a15" d="480,812 735,880 735,905 480,835" /><path d="M486 810L735 880" stroke="#33291a" strokeWidth="17" strokeDasharray="2.500 2.200" /><path d="M486 790L735 860" stroke="#84713f" strokeWidth="10" strokeDasharray="1 3.700" />
        <P f="#111" d="680,735 750,722 790,740 780,770 690,790" /><path d="M690 745l60-14 30 10M700 765l75-15" stroke="#555" strokeWidth="1" strokeDasharray="4 2" fill="none" /><P f="#98968d" d="690,775 780,755 780,785 710,810 690,800" /><path d="M695 785l80-20" stroke="#333" strokeWidth="5" strokeDasharray="1 3" />
        <P f="#0e0e0e" d="778,765 830,742 885,758 885,825 800,830 778,810" /><path d="M785 770l50-20 45 12M800 800l85-12M830 755l40 10" stroke="#6a6a6a" strokeWidth="1" fill="none" />
        <P f="#86847c" d="800,840 885,822 885,865 810,885" /><path d="M808 860l75-15" stroke="#333" strokeWidth="6" strokeDasharray="1 4" /><P f="#c1bfb4" d="700,830 750,822 790,840 740,855" /><P f="#b9b6ab" d="730,865 790,850 810,880 760,890" />
        <path d="M640 780l140 30M650 800l90 20M660 760l30 60M760 820l-20 70M645 790l60 10M790 830l20 10M650 770l40-5M820 890l60-15M410 818l70 18" stroke="#2c4527" strokeWidth="1.600" strokeDasharray="3 2 1 2" fill="none" />
        <P f="#7a2626" d="770,722 800,715 888,745 880,755 830,740" />
        <P f="#a3c09b" d="690,938 790,905 850,920 760,950" /><path d="M740 935l60-15 20 8-60 12z" fill="#c6c3b8" stroke="#222" /><path d="M740 925l60-20 40 8" fill="none" stroke="#3a1010" strokeWidth="2.500" strokeDasharray="2 1" /><path d="M665 965Q668 935 695 935L745 950 695 970z" fill="#8f2c2c" stroke="#222" /><path d="M822 920Q835 890 855 892L888 902V922z" fill="#7c2626" stroke="#222" />
        <P f="#8f2c2c" d="995,855 1040,865 995,885" /><P f="#a3c09b" d="1010,860 1080,835 1120,845 1050,865" /><P f="#c6c3b8" d="1040,858 1080,845 1095,850 1055,862" /><path d="M1000 855l80-25 40 8" fill="none" stroke="#3a1010" strokeWidth="2" strokeDasharray="2 1" />
        <P f="#a3c09b" d="315,868 330,862 330,905 315,912" /><path d="M318 912Q320 885 345 880L378 876Q386 885 384 900L335 918z" fill="#8f2c2c" stroke="#222" /><path d="M316 858l55 16" stroke="#5a1a1a" strokeWidth="2.500" strokeDasharray="2 1" />

        <path d="M315 690L392 690V815Q395 845 425 855L360 868 315 860z" fill="url(#postd)" stroke="#222" strokeWidth=".8" /><path d="M354 700V865M315 820l40 8 40-10" stroke="#333" strokeWidth=".8" fill="none" />
        <path d="M577 580H640V890Q650 910 670 915L610 935 555 915Q577 905 577 890z" fill="url(#post)" stroke="#222" strokeWidth=".8" /><path d="M604 590V905M627 590V905M577 905L608 912 640 905" stroke="#333" fill="none" strokeWidth=".8" />

        {/* left range sensor */}
        <P f="#34335f" d="152,482 170,475 395,520 395,530" /><P f="#3c3b72" d="152,482 362,535 362,700 305,690 305,915 208,893 208,655 152,645" /><P f="#25255a" d="362,535 396,528 390,690 362,706" /><P f="#2b2a61" d="305,690 314,685 314,912 305,915" />
        <P f="#7d7db0" d="152,482 170,475 245,495 232,500" /><P f="#7d7db0" d="284,522 300,513 396,528 362,540" />
        <path d="M232 500V535L285 545V520M240 640V655L280 665V645" fill="#5e5d94" stroke="#111" /><rect x="247" y="508" width="42" height="28" rx="8" fill="#c5c3ba" stroke="#222" />
        <Sonar x={168} y={580} /><Sonar x={290} y={610} />

        {/* right range sensor */}
        <P f="#20204f" d="803,545 820,550 820,722 803,708" /><P f="#2d2c60" d="818,550 1050,500 1050,668 995,682 995,885 888,915 888,712 818,725" /><P f="#7d7db0" d="818,550 835,545 925,555 900,560" /><path d="M888 712l8-3v200l-8 6z" fill="#1b1b4a" />
        <path d="M918 540V570L968 555V530M925 665V695L965 680V655z" fill="#5e5d94" stroke="#111" /><rect x="918" y="530" width="36" height="30" rx="4" fill="#b9b7ae" stroke="#222" />
        <Sonar x={908} y={634} left /><Sonar x={1028} y={600} left />

        <P f="#20235c" d="760,335 815,345 815,395 762,365" /><P f="#20235c" d="960,415 1000,405 1005,450 960,430" /><P f="#55544f" d="1000,402 1018,400 1024,425 1022,450 1005,440" />
        <P f="url(#deck)" d="55,408 175,378 725,345 1060,460 637,572" />
        <P f="#6f6e67" d="55,408 637,572 637,605 55,442" /><P f="#77766f" d="637,572 1060,460 1060,492 637,605" />
        <g fill="none" stroke="#111" strokeWidth="1.200"><path d="M318 468l37-11 37 10-37 13zM577 538l32-10 30 9-32 11zM662 377l37-12 35 9-36 12zM917 445l35-10 32 10-32 11z" /></g>
        <path d="M737 515Q740 495 755 488L840 463 895 480Q908 490 900 497L800 530z" fill="#7a2828" stroke="#111" /><path d="M780 492L845 473 895 490 810 512z" fill="#8f4745" stroke="#111" /><path d="M740 512l55 15 12-35" stroke="#111" fill="none" />

        {/* camera bracket */}
        <P f="#8d8c86" d="583,245 650,228 700,240 700,320 640,330 583,290" /><P f="#9d9c97" d="683,250 790,205 835,212 835,290 800,290" /><P f="#7f7e77" d="683,252 800,290 800,340 683,305" />
        <path d="M583 245l55 15v70M640 262l60-20" stroke="#222" fill="none" />

        {/* controller board */}
        <P f="#6583ad" d="170,365 480,295 727,350 415,432" /><P f="#3d5f94" d="170,365 335,415 350,412 415,432 727,350 727,358 415,442 350,422 335,425 170,375" />
        <path d="M190 372l120 32M340 400l60 18M350 370l50 12M520 330l90 15M210 368l60 12M360 388l40 10M640 345l40-8" stroke="#e3e3d8" strokeWidth="2" strokeDasharray="1.500 3" fill="none" />
        <path d="M200 380l80 20M345 380l55 14M640 355l60-14M350 395l30 8" stroke="#1d2a40" strokeWidth="2" strokeDasharray="2 3" fill="none" />
        <P f="#53534d" d="182,297 265,275 265,345 182,365" /><P f="#2a2a28" d="265,272 370,247 370,280 265,305" />
        <P f="#1d1d1c" d="230,340 243,305 440,262 462,285 462,305 260,375" /><path d="M260 335L440 290" stroke="#b5b3a8" strokeWidth="7" strokeDasharray="1.200 2.500" /><path d="M250 308L440 268" stroke="#666" strokeWidth="2" strokeDasharray="6 2" />
        <path d="M280 400h45v-35h-45z" fill="#111" /><path d="M276 355h52" stroke="#a19f96" strokeWidth="16" strokeDasharray="2.500 2" />
        <P f="#1a1a19" d="328,350 440,310 440,330 345,365" />
        <P f="#5c5c58" d="470,315 520,300 545,308 520,330 480,333" /><path d="M480 320l55-14" stroke="#111" strokeWidth="4" strokeDasharray="2 2" />
        <P f="#262625" d="490,202 515,195 545,207 545,290 465,305" /><path d="M443 250Q443 212 470 212L510 210V300H465V268H443z" fill="#333332" stroke="#111" /><ellipse cx="457" cy="248" rx="12" ry="18" fill="#4e4e4c" stroke="#111" />
        <P f="#232322" d="405,362 515,330 515,395 415,425" /><P f="#232322" d="518,330 637,298 637,362 518,395" />
        <path d="M415 355L515 330M590 300l45-5" stroke="#000" strokeWidth="4" strokeDasharray="1.500 1.500" />
        <P f="#222" d="648,345 665,335 705,342 700,355 665,358" /><ellipse cx="678" cy="342" rx="20" ry="8" fill="#8d8c86" stroke="#111" /><ellipse cx="678" cy="330" rx="12" ry="8" fill="#8f3a38" stroke="#111" />

        {/* camera clip and camera */}
        <path d="M438 145L438 105Q440 93 460 88L595 55 745 95C800 112 830 170 832 215L790 205 700 232 682 285Q668 295 655 282C655 240 635 195 595 188z" fill="#141414" stroke="#000" />
        <P f="#888886" d="452,91 595,55 745,97 612,131" /><path d="M470 90L595 57 618 78 555 98z" fill="#949492" stroke="#111" />
        <path d="M676 178L780 150 782 185 700 213z" fill="#000" /><path d="M600 135L740 98C790 115 815 160 825 205M630 155L770 120M618 150C660 180 680 230 672 280" stroke="#3f3f3f" fill="none" />
        <P f="#fff" s="none" d="700,212 765,196 770,205 705,220" />
        <path d="M880 195L1040 147C1110 130 1158 190 1158 260 1158 330 1130 370 1100 380L910 428C850 440 800 370 800 300 802 240 835 205 880 195z" fill="#0c0c0c" stroke="#000" strokeWidth="1" />
        <path d="M815 300C820 240 850 210 890 203" stroke="#2c2c2c" strokeWidth="3" fill="none" /><path d="M880 215L1080 165C1120 175 1140 220 1138 265 1138 300 1130 330 1120 345L905 400" stroke="#262626" strokeWidth="1" fill="none" />
        <path d="M870 263L1055 212Q1045 270 1065 322L885 367C862 340 858 290 870 263z" fill="#73726d" stroke="#000" />
        <ellipse cx="1095" cy="255" rx="40" ry="52" fill="#0f0f0f" stroke="#242424" /><ellipse cx="1095" cy="255" rx="28" ry="36" fill="none" stroke="#262626" /><ellipse cx="1095" cy="255" rx="15" ry="20" fill="#050505" stroke="#262626" />
      </g>

      {/* front box */}
      <g transform="translate(940 420) scale(.33333)">
        <P f="#a3a3a0" d="248,425 870,290 1050,332 440,465" />
        <P f="#454541" d="300,422 858,303 1000,332 440,452" /><P f="#6c6b66" d="858,303 1000,332 858,362" />
        <P f="url(#boxl)" d="248,425 440,465 440,875 248,832" />
        <P f="#696963" d="440,465 1050,332 1050,742 440,875" />
        <path d="M40 655L170 630Q300 720 345 810 360 860 357 915 370 930 365 960 330 985 290 1000L200 900z" fill="#b8b6ab" stroke="#151515" strokeWidth=".8" />
        <path d="M255 750L300 742M300 925L357 917" stroke="#222" strokeWidth=".8" />
        <g stroke="#151515" strokeWidth=".8">
          <g transform="rotate(-5 140 890)"><ellipse cx="141" cy="888" rx="160" ry="240" fill="#8f8d85" /><ellipse cx="135" cy="888" rx="160" ry="240" fill="#c3c0b5" /><ellipse cx="128" cy="888" rx="158" ry="239" fill="#aeaba1" /></g>
          <path d="M-155 702L-20 715L115 684 -40 650z" fill="#7b7a77" stroke="none" /><path d="M-20 716L115 685" />
          <path d="M-30 718L122 684C220 720 270 820 270 910 270 1010 230 1080 175 1100L50 1120z" fill="url(#rub)" />
        </g>
      </g>
      <g transform="translate(500 420) scale(.33333)"><WheelFace /><g transform="translate(991 227)"><WheelFace /></g></g>
    </svg>
  );
}

function ViewCube() {
  return (
    <svg className="absolute top-[13px] right-[12px]" width="104" height="96" viewBox="0 0 104 96">
      <defs><filter id="bl"><feGaussianBlur stdDeviation="3" /></filter><linearGradient id="cf" x1="0" y1="0" x2="0" y2="1"><stop offset="0" stopColor="#f1f1f1" /><stop offset="1" stopColor="#dcdcdc" /></linearGradient></defs>
      <path d="M18 75L52 91 86 75 52 66z" fill="#777" filter="url(#bl)" opacity=".8" />
      <path d="M18 27L52 24 87 27 84 73 52 84 20 73z" fill="url(#cf)" />
      <path d="M18 27L52 31V84L20 73z" fill="#e6e7e8" /><path d="M44 41h14v32l-6 2-8-2z" fill="#d8dadd" opacity=".7" />
      <path d="M18 27L52 24 87 27 52 31zM18 27L20 73 52 84 84 73 87 27M52 31V84" fill="none" stroke="#888" strokeDasharray="9 3" />
      <path d="M52.500 16v7" stroke="#8a8aff" strokeWidth="2" /><path d="M13 75l8-2" stroke="#ff7a7a" strokeWidth="2" /><path d="M83 73l8 2" stroke="#8af58a" strokeWidth="2" />
      <g fontFamily="Liberation Sans, sans-serif" fontWeight="bold" textAnchor="middle">
        <text x="52" y="15" fontSize="14" fontWeight="normal" fill="#8080ff" stroke="#8080ff" strokeWidth=".4">Z</text>
        <text x="7" y="82" fontSize="14" fontWeight="normal" fill="#ff8585" stroke="#ff8585" strokeWidth=".4">X</text>
        <text x="97" y="82" fontSize="14" fontWeight="normal" fill="#8df58d" stroke="#8df58d" strokeWidth=".4">Y</text>
        <text transform="matrix(.6 .1 0 1 35 59)" fontSize="12" fill="#92979c">RIGHT</text>
        <text transform="matrix(.58 -.1 0 1 69.500 59)" fontSize="12" fill="#92979c">BACK</text>
      </g>
    </svg>
  );
}

function NavBar() {
  const n = { width: 17, height: 18, viewBox: "0 0 17 18", fill: "none", stroke: "#3d4250", strokeWidth: 1.2, className: "shrink-0" };
  return (
    <div className="absolute bottom-[4px] left-[833px] flex h-6 w-[253px] items-center bg-[#f1f1f1] pl-[3px]">
      <svg {...n}><path d="M8.500 2v15M7 2h3v6M1 10q7-4 14 0M1 10q7 4 14 0M1 10l4-3M1 10l4 3" /></svg>
      <span className="ml-[3px]"><Caret /></span>
      <svg {...n} className="ml-[6px] shrink-0"><path d="M1 6.500h15v10H1zM3 6V2l2 2 4-2 2 3M4 10h9v3H4z" fill="#e2e4e8" /></svg>
      <svg {...n} className="ml-[9px] shrink-0"><path d="M6 16q-5-5-4.500-7 2-.5 3 2L4 4q1.500-1.500 2 0l.5 3L7 2q1.500-1.500 2 0v5l1-4q1.500-1 2 0l-.5 5 1.500-3q1.500 0 1.500 1-1 6-3.500 10z" fill="#fff" /></svg>
      <svg {...n} className="ml-[8px] shrink-0"><circle cx="6" cy="7" r="4.500" fill="#d5eef2" /><path d="M9 10l5 5.500" strokeWidth="2.500" /><path d="M12 3.500h5M14.500 1v5M12 7.500h5" /></svg>
      <svg {...n} className="ml-[9px] shrink-0"><path d="M1 1h15v15H1z" strokeDasharray="2 2" /><circle cx="7.500" cy="7.500" r="5.500" fill="#d5eef2" /><path d="M11 11l5 5.500" strokeWidth="2.500" /></svg>
      <span className="ml-[5px]"><Caret /></span>
      <svg {...n} className="ml-[13px] shrink-0"><path d="M1 1.500h15v11H1zM5 16.500h7M8.500 13v3" fill="#fff" strokeWidth="1.500" /><rect x="3" y="3.500" width="11" height="7" fill="#8fb2dd" stroke="none" /></svg>
      <span className="ml-[2px]"><Caret /></span>
      <svg {...n} className="ml-[5px] shrink-0"><path d="M1 1h15v15H1zM4 1v15M7 1v15M10 1v15M13 1v15M1 4h15M1 7h15M1 10h15M1 13h15" strokeWidth="1" stroke="#61656f" fill="#fff" /></svg>
      <span className="ml-[2px]"><Caret /></span>
      <svg {...n} className="ml-[5px] shrink-0" fill="#b5cdec"><path d="M1 1.500h6.500v6H1zM9.500 1.500H16v6H9.500zM1 9.500h6.500v6H1zM9.500 9.500H16v6H9.500z" /></svg>
      <span className="ml-[2px]"><Caret /></span>
    </div>
  );
}

/* ---------- timeline ---------- */

const TIMELINE = "SEEEESSSEMMEEEEMSECSSSESEFBCCCCCCCCPZSFFFFFFPMSMMPMEEEMSEMMMLMPAPAAAPMLL";

function TimelineIcon({ k }: { k: string }) {
  const d = "#3a3f4a";
  return (
    <svg width="17" height="17" viewBox="0 0 17 17" fill="none" stroke={d} strokeLinejoin="round">
      {k === "S" && <><rect x="1" y="1" width="15" height="15" fill="#dbe7f6" stroke="#111" strokeWidth="1.600" /><path d="M3.500 4v9.500H13" stroke="#333" strokeWidth="1.300" /><path d="M6 11l1.500-3.500L14 1l2 2-6.500 6.500z" fill="#f5bd1f" stroke="#c98a0a" strokeWidth=".8" /><path d="M6 11l1-2.500 1.500 1.500z" fill="#111" stroke="none" /></>}
      {k === "E" && <><path d="M1 4l2.500-3H11v12l-2.500 3H1z" fill="#a9c8ef" strokeWidth="1.100" /><path d="M8.500 4V16L11 13V1z" fill="#6d8fbf" stroke="none" /><path d="M1.500 14h7v2h-7z" fill="#eee" stroke="none" /><path d="M14.500 16V4" /><path d="M12.500 5l2-4 2 4z" fill={d} stroke="none" /></>}
      {k === "M" && <><g fill="#444" stroke="none"><path d="M8.500 0L11 4H6zM8.500 17L11 13H6zM0 8.500L4 6v5zM17 8.500L13 6v5zM7.700 3h1.600v2.500H7.700zM7.700 11.500h1.600V14H7.700zM3 7.700h2.500v1.600H3zM11.500 7.700H14v1.600h-2.500z" /></g><circle cx="8.500" cy="8.500" r="2" stroke="#444" /></>}
      {k === "C" && <><path d="M1 3l2-2h6v5L7 8H1z" fill="#e8eaee" /><path d="M7 10l2.500-3H16v6l-2.500 3H7z" fill="#d9dce2" /><path d="M13 10v5.500M7 10h6l3-3" stroke="#aaa" /><path d="M2.500 9.500v4H5M4 11.500l2 2-2 2" stroke="#1b6fd0" strokeWidth="1.400" /></>}
      {k === "P" && <><rect x="1" y="1" width="5.500" height="8" rx="2.500" fill="#f4f4f6" /><rect x="10" y="7" width="6" height="9" rx="2.800" fill="#e2e4e8" /><path d="M3.500 10.500v3.500H7M6 12l2 2-2 2" stroke="#1b6fd0" strokeWidth="1.400" /></>}
      {k === "F" && <><path d="M1 6q1-5 7-5 8 1 8 8v4l-3 3H1z" fill="#cdd1d9" strokeWidth="1.100" /><path d="M6 3q7 0 7 8l3-3Q15 1 8 1z" fill="#87aee0" stroke="#33507e" /></>}
      {k === "B" && <path d="M1 4l3-3h12v11l-3 4H1z" fill="#f5f6f8" strokeWidth="1.100" stroke="#555" />}
      {k === "Z" && <><rect x="1" y="1" width="15" height="15" fill="#0f93f5" stroke="#0f80e8" /><path d="M9 1.500h6.500v6H12q0 2-1.500 2T9 7.500zM1.500 9.500H5q0-2 1.500-2T8 9.500v6H1.500zM10 12h3v3h-3z" fill="#fff" stroke="none" /></>}
      {k === "L" && <><path d="M1 4l2-3h13v12l-2 3H1z" fill="#f3f4f6" /><path d="M7 9.500Q5 7 7.500 5.500t5-1.500 0 4M9 7q2 2-.5 4t-4.500 1.500 0-3.500" stroke="#333" strokeWidth="1.800" /></>}
      {k === "A" && <><circle cx="12" cy="8.500" r="4" fill="#a9c8ef" stroke="#33507e" /><path d="M0 8.500L4.500 5v2H9v3H4.500v2z" fill="#111" stroke="none" /></>}
    </svg>
  );
}

function Timeline() {
  const g = "#454545";
  return (
    <div className="relative flex h-[50px] shrink-0 border-t-2 border-[#cbcbcb] bg-[#f1f1f1]">
      <div className="flex w-[142px] shrink-0 items-center gap-[12px] pt-[10px] pl-[10px]">
        <svg width="13" height="14" viewBox="0 0 13 14" fill={g}><path d="M1 0h1.500v14H1zM12.500 1v12L4 7z" /></svg>
        <svg width="13" height="14" viewBox="0 0 13 14" fill={g}><path d="M9 1v12L0 7zM11 4h1.500v6H11z" /></svg>
        <svg width="13" height="14" viewBox="0 0 13 14" fill={g}><path d="M0 0v14l12-7z" /></svg>
        <svg width="13" height="14" viewBox="0 0 13 14" fill={g}><path d="M4 1v12l9-6zM0 4h1.500v6H0z" /></svg>
        <svg width="13" height="14" viewBox="0 0 13 14" fill={g}><path d="M11 0h1.500v14H11zM.5 1v12L9 7z" /></svg>
      </div>
      <div className="flex flex-col pt-[11px]">
        <div className="flex">
          {TIMELINE.split("").map((k, i) => (
            <div key={i} className={"flex h-6 w-6 items-center justify-center pr-px " + (i > 10 && i < 15 ? "bg-[#e6e71c]" : "")}><TimelineIcon k={k} /></div>
          ))}
        </div>
        <div className="flex border-b-2 border-[#c6c6c6]">
          {TIMELINE.split("").map((_, i) => <div key={i} className="flex h-[5px] w-6 justify-center"><div className="h-[5px] w-[2px] bg-[#c6c6c6]" /></div>)}
        </div>
      </div>
      <div className="absolute top-[9px] left-[1864px] flex flex-col items-center">
        <svg width="12" height="34" viewBox="0 0 12 34"><path d="M0 0h12v5L7 9v24H5V9L0 5z" fill="#5e5e5e" /></svg>
      </div>
      <div className="absolute top-0 left-[1736px] h-[6px] w-[178px] rounded-b-[3px] bg-[#cbcbcb]" />
      <div className="absolute top-[20px] left-[1891px]"><Gear c="#5a5a5a" /></div>
    </div>
  );
}

/* ---------- taskbar ---------- */

const Folder = () => <svg width="14" height="16" viewBox="0 0 14 16"><path d="M0 1h11v9h2v6H0z" fill="#f5d06e" /><path d="M1 0h10v15H1z" fill="#ffe394" /></svg>;
const Tinker = () => <svg width="13" height="14" viewBox="0 0 13 14"><path d="M0 3l4-2v12l-4-1z" fill="#0b7fc0" /><path d="M4 1q9-2 9 5v5l-4 2V6q0-2-5-1z" fill="#1fb4ea" /></svg>;
const Edge = () => <svg width="16" height="16" viewBox="0 0 16 16"><path d="M0 7Q2 0 8.500 0 16 0 16 9H5q.5 4 5 4 3 0 5-1.500v3.300Q13 16 9.500 16 2 16 1.500 9.500 3 5 6 4q-3.500 0-6 3zm5.500-.5h6Q11 3.500 8.500 3.500t-3 3z" fill="#0a78d7" /></svg>;
const Chrome = () => <svg width="15" height="15" viewBox="0 0 15 15"><circle cx="7.500" cy="7.500" r="7.500" fill="#fbc116" /><path d="M7.500 7.500L1 3.700A7.500 7.500 0 0 1 14 4H7.500z" fill="#e33b2e" /><path d="M7.500 7.500L1 3.700A7.500 7.500 0 0 0 7 15l3.500-6z" fill="#2ba24c" /><circle cx="7.500" cy="7.500" r="3.500" fill="#fff" /><circle cx="7.500" cy="7.500" r="2.700" fill="#4384f3" /></svg>;
const TaskMgr = () => <svg width="16" height="16" viewBox="0 0 16 16"><path d="M3 1h13v10H3zM7 11h5v3H7zM0 5h2v10H0z" fill="#c5ccd2" /><path d="M4 2h11v8H4z" fill="#eaf7fb" /><path d="M4 7l3-3 3 4 2-3 3 2" stroke="#1b87a8" fill="none" /><path d="M5 14h9v1.500H5z" fill="#c5ccd2" /></svg>;
const Calc = () => <svg width="12" height="16" viewBox="0 0 12 16"><path d="M0 0h12v16H0z" fill="#fff" /><path d="M2 2h8v2.500H2zM2 6.500h2v2H2zM5 6.500h2v2H5zM8 6.500h2v2H8zM2 9.500h2v2H2zM5 9.500h2v2H5zM8 9.500h2v2H8zM2 12.500h2v2H2zM5 12.500h2v2H5zM8 12.500h2v2H8z" fill="#123248" /></svg>;
const Wanhao = () => <svg width="15" height="15" viewBox="0 0 15 15"><path d="M0 0h15v15H0z" fill="#0e7fae" /><path d="M2 7q1-5 5-4t6 3q-1 3-5 2t-6 1zM1 12q3-2 6 0t7-1v2q-4 2-7 0t-6 1z" fill="#fff" /></svg>;

const TASKS: { t: string; tw: number; w: number; ml: string; pl: string; tp: number; icon: React.ReactNode; active?: boolean }[] = [
  { t: "Fusion 360 Store: ...", tw: 101, w: 129, ml: "ml-[15px]", pl: "pl-[3px]", tp: 4, icon: <Edge /> },
  { t: "monoprice", tw: 58, w: 129, ml: "ml-[9px]", pl: "pl-[5px]", tp: 4, icon: <Folder /> },
  { t: "Robot Cad", tw: 56, w: 129, ml: "ml-[8px]", pl: "pl-[5px]", tp: 4, icon: <Folder /> },
  { t: "Robot Cad", tw: 56, w: 129, ml: "ml-[8px]", pl: "pl-[5px]", tp: 4, icon: <Folder /> },
  { t: "(15) Star Wars - R...", tw: 99, w: 129, ml: "ml-[15px]", pl: "pl-[4px]", tp: 4, icon: <Chrome /> },
  { t: "Task Manager", tw: 73, w: 129, ml: "ml-[9px]", pl: "pl-[3px]", tp: 4, icon: <TaskMgr /> },
  { t: "Calculator", tw: 53, w: 129, ml: "ml-[9px]", pl: "pl-[5px]", tp: 6, icon: <Calc /> },
  { t: "MainRover - 3D B...", tw: 101, w: 129, ml: "ml-[9px]", pl: "pl-[5px]", tp: 5, icon: <Tinker /> },
  { t: "FullRoverMv2 - 3...", tw: 98, w: 129, ml: "ml-[8px]", pl: "pl-[5px]", tp: 5, icon: <Tinker /> },
  { t: "WANHAO", tw: 54, w: 128, ml: "ml-[9px]", pl: "pl-[4px]", tp: 4, icon: <Wanhao /> },
  { t: "Autodesk Fusion ...", tw: 100, w: 136, ml: "ml-[5px]", pl: "pl-[8px]", tp: 3, icon: <FusionLogo />, active: true },
];

function Taskbar() {
  const w = { fill: "none", stroke: "#fff", strokeWidth: 1.2 };
  return (
    <div className="flex h-[30px] shrink-0 items-center bg-linear-to-r from-[#0f2f42] via-[#0f344d] to-[#0d2b40] font-['Open_Sans',sans-serif] text-[12px] text-white">
      <svg className="ml-[10px]" width="16" height="16" viewBox="0 0 16 16" fill="#fff"><path d="M0 2.300L6.700 1.300v6.200H0zM7.600 1.200L16 0v7.500H7.600zM0 8.400h6.700v6.300L0 13.700zM7.600 8.400H16V16l-8.400-1.200z" /></svg>
      <svg className="ml-[20px]" width="16" height="16" viewBox="0 0 16 16"><circle cx="8" cy="8" r="6.500" fill="none" stroke="#fff" strokeWidth="2" /></svg>
      <svg className="ml-[18px]" width="20" height="15" viewBox="0 0 20 15" {...w}><path d="M4.500.7h11v13.600h-11zM3 2.500H.7v10H3M17 2.500h2.300v10H17" /></svg>
      {TASKS.map((k, i) => (
        <React.Fragment key={i}>
          {i === 4 && (
            <>
              <svg className="ml-[13px] shrink-0" width="16" height="17" viewBox="0 0 16 17"><path d="M0 5h16v12H0z" fill="#fff" /><path d="M5 5V2q3-2.500 6 0v3" stroke="#fff" fill="none" /><path d="M4 7.500h3.500V11H4z" fill="#f25022" /><path d="M8.500 7.500H12V11H8.500z" fill="#7fba00" /><path d="M4 12h3.500v3.500H4z" fill="#00a4ef" /><path d="M8.500 12H12v3.500H8.500z" fill="#ffb900" /></svg>
              <svg className="ml-[21px] shrink-0" width="16" height="14" viewBox="0 0 16 14"><path d="M0 4l8-4 8 4v10H0z" fill="#fff" /><path d="M1 4.500h14L8 9z" fill="#123248" /></svg>
            </>
          )}
          <div className={`flex h-[30px] shrink-0 items-center border-b-2 border-[#86bdee] ${k.ml} ${k.pl} ${k.active ? "bg-[#0b4a80]" : ""}`} style={{ width: k.w }}>
            <span className="shrink-0">{k.icon}</span>
            <span style={{ marginLeft: k.tp }}><Fit w={k.tw}>{k.t}</Fit></span>
          </div>
        </React.Fragment>
      ))}
      <svg className="ml-[10px] shrink-0" width="12" height="7" viewBox="0 0 12 7" {...w}><path d="M.7 6.300L6 1l5.300 5.300" /></svg>
      <svg className="ml-[9px] shrink-0" width="17" height="15" viewBox="0 0 17 15" {...w}><path d="M5 3.500h11v7H5M10.500 11v3M7 14h7M.7.7h4v4h-4zM2.700 5v9" /></svg>
      <svg className="ml-[6px] shrink-0" width="18" height="14" viewBox="0 0 18 14" {...w}><path d="M.7 5h2.500L6.500 1.500v11L3.200 9H.7zM9 4.500q1.500 2.500 0 5M11.500 3q2.500 4 0 8M14 1q4 6 0 12" /></svg>
      <Fit w={23} className="ml-[9px]">ENG</Fit>
      <Fit w={49} className="ml-[13px]">10:05 AM</Fit>
      <svg className="ml-[18px] shrink-0" width="17" height="16" viewBox="0 0 17 16" {...w}><path d="M.7.7h15.600v11H11.500L8.500 15V11.700H.7z" /></svg>
      <div className="ml-[18px] h-[30px] w-px bg-[#4f6878]" />
    </div>
  );
}

export default function App() {
  return (
    <div className="flex h-[1080px] w-[1920px] flex-col overflow-hidden bg-white">
      <Gradients />
      <TitleBar />
      <TabBar />
      <Notice />
      <div className="relative flex h-[913px] shrink-0 flex-col">
        <Model />
        <ViewCube />
        <Ribbon />
        <div className="mt-1"><PanelBar title="BROWSER" tw={52} /></div>
        <div className="mt-[5px] flex pl-2">
          <div className="h-[763px] w-[6px] rounded-t-[3px] bg-[#c9cacb]"><div className="h-[246px] w-[6px] rounded-[3px] border border-[#8a8a8a] bg-[#9b9b9b]" /></div>
          <div className="flex flex-col gap-1 font-['Liberation_Sans',Arial,sans-serif] text-[11px] leading-5 text-[#3a3a3a]">
            {ROWS.map((r, i) => <TreeRow key={i} r={r} />)}
          </div>
        </div>
        <div className="mt-auto mb-1"><PanelBar title="COMMENTS" tw={57} plus /></div>
        <NavBar />
        <svg className="absolute right-[10px] bottom-[8px]" width="17" height="16" viewBox="0 0 17 16"><path d="M8.500 1L16 15H1z" fill="#f8d81c" stroke="#6e5a08" strokeWidth="1.300" strokeLinejoin="round" /><path d="M8.500 5.500v5M8.500 12v1.500" stroke="#222" strokeWidth="1.800" /></svg>
      </div>
      <Timeline />
      <Taskbar />
    </div>
  );
}
